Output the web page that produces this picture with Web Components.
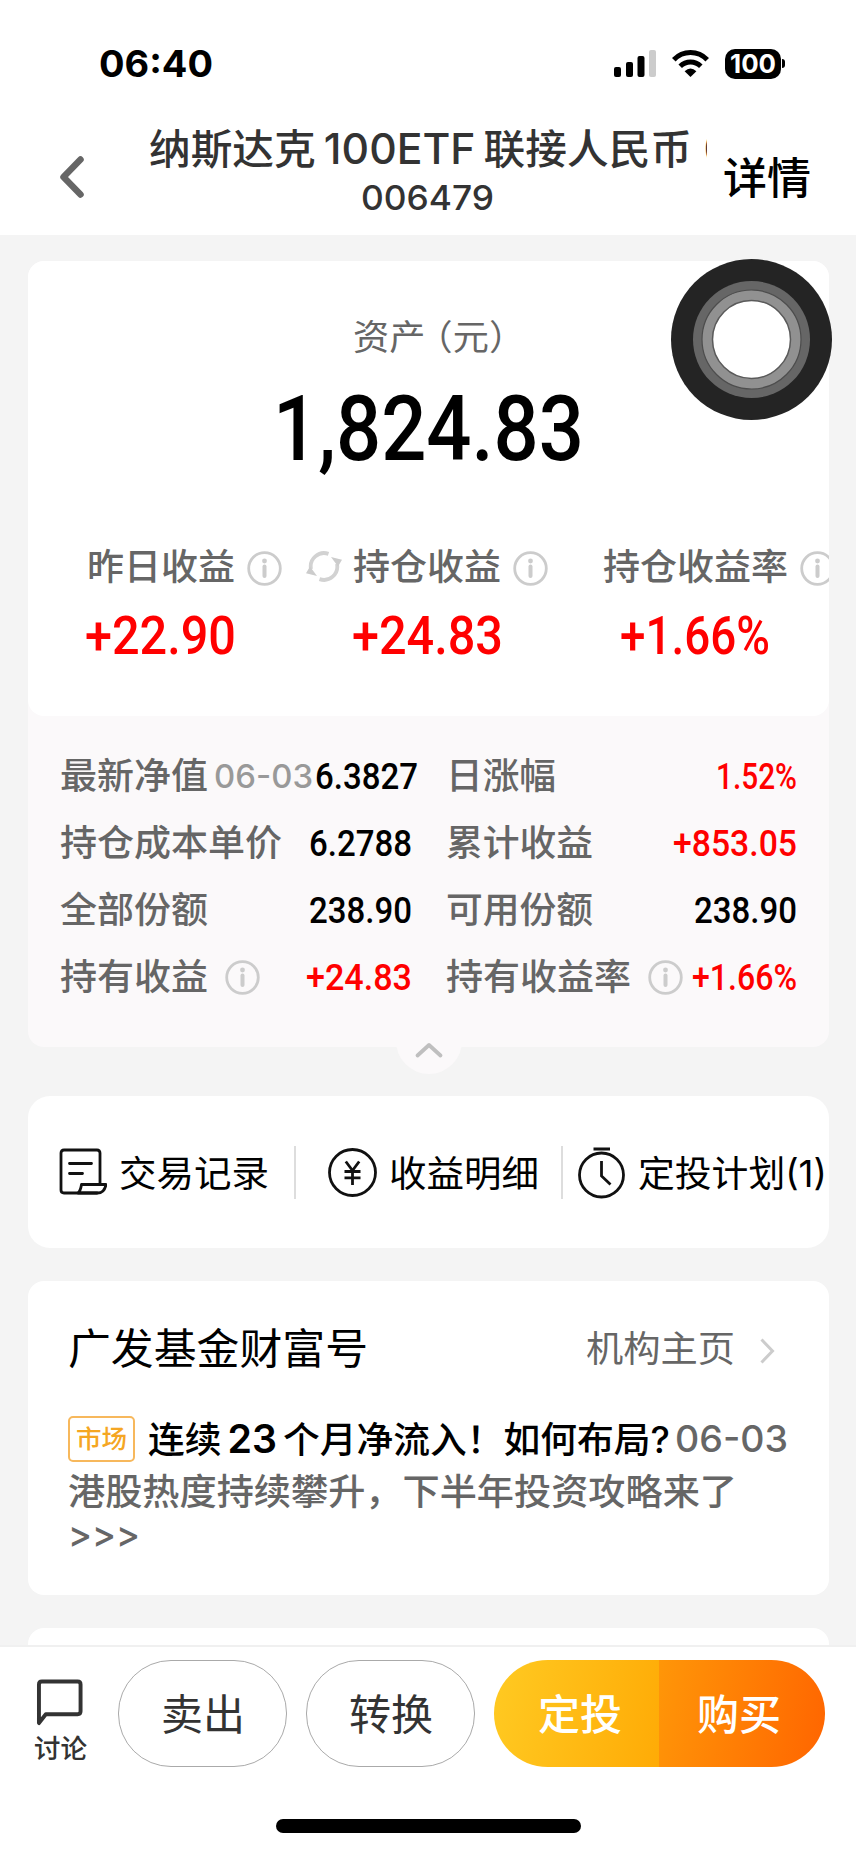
<!DOCTYPE html>
<html lang="zh-CN">
<head>
<meta charset="utf-8">
<title>持仓详情</title>
<style>
  html, body {
    margin: 0;
    height: 100%;
  }
  body {
    display: flex;
    flex-direction: column;
    width: 856px;
    height: 1854px;
    overflow: hidden;
    background: #f4f4f4;
    color: #000;
    font-family: Inter, "Noto Sans CJK SC", sans-serif;
    position: relative;
  }
  main {
    flex: 1;
    min-height: 0;
    overflow: hidden;
    padding: 26px 27px 0 28px;
  }
  fund-card { margin-top: 33px; }
  .en { margin: 0 8px; font-size: 42px; }
  .fund { white-space: nowrap; }
  .paren { font-feature-settings: "halt"; margin-left: 7px; }
</style>
</head>
<body>
  <status-bar time="06:40" battery="100"></status-bar>
  <nav-bar>
    <span slot="title" class="fund"><fit-text width="543">纳斯达克<span class="en">100ETF</span>联接人民币</fit-text><span class="paren">（</span></span>
    <fit-text slot="code" width="133">006479</fit-text>
    <fit-text slot="action" width="88">详情</fit-text>
  </nav-bar>
  <main>
    <asset-card></asset-card>
    <quick-actions></quick-actions>
    <fund-card></fund-card>
    <fund-card empty></fund-card>
  </main>
  <bottom-bar></bottom-bar>
  <assist-touch></assist-touch>

<script>
  const define = (name, html, setup) => {
    customElements.define(name, class extends HTMLElement {
      constructor() {
        super();
        this.attachShadow({ mode: 'open' });
      }

      connectedCallback() {
        this.shadowRoot.innerHTML = typeof html === 'function' ? html(this) : html;
        if (setup) setup(this);
      }
    });
  };

  //  *  icons  *  //
  define('info-icon', `
    <style>
      :host { display: block; width: 35px; height: 35px; flex: none; }
      svg { display: block; }
    </style>
    <svg width="35" height="35" viewBox="0 0 35 35" fill="none" stroke="#ccc">
      <circle cx="17.5" cy="17.5" r="15.8" stroke-width="2.8"/>
      <path d="M17.5 15.5V25" stroke-width="4" stroke-linecap="round"/>
      <circle cx="17.5" cy="10" r="2.4" fill="#ccc" stroke="none"/>
    </svg>
  `);

  define('refresh-icon', `
    <style>
      :host { display: block; width: 36px; height: 32px; flex: none; }
      svg { display: block; }
    </style>
    <svg width="36" height="32" viewBox="0 0 36 32" fill="none" stroke="#d2d2d2" stroke-width="3.8">
      <path d="M5 18A13.300 13.300 0 0 1 22.500 2.900"/>
      <path d="M31 13A13.300 13.300 0 0 1 13.500 28.100"/>
      <path d="M25 6L36 8.700L32 15.500Z" fill="#ccc" stroke="none"/>
      <path d="M11 25L0 22.300L4 15.500Z" fill="#ccc" stroke="none"/>
    </svg>
  `);

  //  *  header  *  //
  define('status-bar', (el) => `
    <style>
      :host {
        display: flex;
        align-items: center;
        height: 127px;
        padding: 0 71px 0 99px;
        box-sizing: border-box;
        background: #fff;
      }
      .time { font-size: 37px; font-weight: 700; flex: 1; }
      svg { display: block; }
      .wifi { margin: 0 16px; }
      .battery {
        width: 56px;
        height: 30px;
        border-radius: 10px;
        background: #000;
        color: #fff;
        display: flex;
        align-items: center;
        justify-content: center;
        font-size: 25.5px;
        font-weight: 700;
      }
      .cap { width: 3px; height: 9px; margin-left: 1px; border-radius: 0 4px 4px 0; background: #000; }
    </style>
    <span class="time"><fit-text width="114">${el.getAttribute('time')}</fit-text></span>
    <svg width="42" height="27" viewBox="0 0 42 27">
      <rect x="0" y="17" width="7" height="10" rx="2"/>
      <rect x="12" y="12" width="7" height="15" rx="2"/>
      <rect x="23.5" y="6" width="7" height="21" rx="2"/>
      <rect x="35" y="0" width="7" height="27" rx="2" fill="#ccc"/>
    </svg>
    <svg class="wifi" width="37" height="27" viewBox="0 0 37 27" fill="none" stroke="#000" stroke-width="5">
      <path d="M1.8 9.8C11 .2 26 .2 35.2 9.8"/>
      <path d="M8.2 16.3C14 10.6 23 10.6 28.8 16.3"/>
      <path d="M12.6 21.2Q18.5 16 24.4 21.2L18.5 27Z" fill="#000" stroke="none"/>
    </svg>
    <span class="battery"><fit-text width="46">${el.getAttribute('battery')}</fit-text></span>
    <span class="cap"></span>
  `);

  define('nav-bar', `
    <style>
      :host {
        display: flex;
        align-items: flex-start;
        height: 108px;
        background: #fff;
        color: #333;
      }
      .back { width: 148px; padding: 29px 0 0 60px; box-sizing: border-box; flex: none; }
      .back svg { display: block; }
      .titles { width: 559px; display: flex; flex-direction: column; align-items: center; flex: none; }
      .title { width: 558px; overflow: hidden; font-size: 41px; line-height: 50px; height: 50px; margin-top: -3px; font-weight: 500; }
      .code { font-size: 34.5px; line-height: 40px; margin: 4px 0 0 0; font-weight: 500; }
      .action { color: #000; font-size: 43px; line-height: 50px; font-weight: 500; margin: 26px 0 0 16px; }
    </style>
    <div class="back">
      <svg width="24" height="42" viewBox="0 0 24 42" fill="none" stroke="#666" stroke-width="6.5" stroke-linecap="round" stroke-linejoin="round">
        <path d="M20.5 3.5L3.5 21L20.5 38.5"/>
      </svg>
    </div>
    <div class="titles">
      <div class="title"><slot name="title"></slot></div>
      <div class="code"><slot name="code"></slot></div>
    </div>
    <div class="action"><slot name="action"></slot></div>
  `);

  //  *  holdings  *  //
  define('profit-stat', (el) => `
    <style>
      :host { display: block; }
      .label {
        display: grid;
        grid-template-columns: minmax(0, 1fr) auto minmax(0, 1fr);
        align-items: center;
        height: 50px;
        font-size: 36.5px;
        line-height: 50px;
        font-weight: 500;
        color: #666;
      }
      .before { display: flex; justify-content: flex-end; margin-right: 11px; }
      .after { margin: 2px 0 0 12px; }
      .value {
        display: flex;
        justify-content: center;
        margin-top: 14px;
        color: #f00;
        font: 500 53px/60px Roboto, sans-serif;
      }
    </style>
    <div class="label">
      <span class="before"><slot></slot></span>
      <fit-text width="${el.getAttribute('w')}">${el.getAttribute('label')}</fit-text>
      <info-icon class="after"></info-icon>
    </div>
    <div class="value"><fit-text width="${el.getAttribute('vw')}">${el.getAttribute('value')}</fit-text></div>
  `);

  define('detail-item', (el) => `
    <style>
      :host {
        display: flex;
        align-items: center;
        height: 67px;
        font-size: 36.5px;
        line-height: 50px;
        font-weight: 500;
        color: #666;
        white-space: nowrap;
      }
      .date { color: #999; font-size: 33px; margin-left: 8px; }
      info-icon { margin: 2px 0 0 17px; }
      .value { margin-left: auto; color: #000; font: 500 37.5px/50px Roboto, sans-serif; }
      .value.tight { margin-left: 2px; }
      :host([up]) .value { color: #f00; }
    </style>
    <fit-text width="${el.getAttribute('w')}">${el.getAttribute('label')}</fit-text>
    ${el.hasAttribute('date') ? `<span class="date"><fit-text width="99">${el.getAttribute('date')}</fit-text></span>` : ''}
    ${el.hasAttribute('info') ? '<info-icon></info-icon>' : ''}
    <span class="value ${el.hasAttribute('date') ? 'tight' : ''}"><fit-text width="${el.getAttribute('vw')}">${el.getAttribute('value')}</fit-text></span>
  `);

  define('asset-card', `
    <style>
      :host { display: block; height: 835px; }
      .card { height: 786px; border-radius: 16px; background: #fbf9fa; }
      .top { height: 455px; border-radius: 16px; background: #fff; overflow: hidden; }
      .caption {
        display: flex;
        justify-content: center;
        padding: 51px 0 0 2px;
        font-size: 35px;
        line-height: 50px;
        color: #666;
        font-weight: 400;
      }
      .unit { font-feature-settings: "halt"; margin-left: 9px; }
      .total { display: flex; justify-content: center; margin-top: 12px; font: 500 91px/110px Roboto, sans-serif; }
      .stats { display: grid; grid-template-columns: 265px 268px 268px; margin-top: 58px; }
      .details {
        display: grid;
        grid-template-columns: 352px 351px;
        column-gap: 34px;
        padding: 26px 0 0 32px;
      }
      .fold { display: flex; justify-content: center; }
      .fold svg { display: block; margin-top: -33px; }
    </style>
    <div class="card">
      <div class="top">
        <div class="caption"><fit-text width="154">资产<span class="unit">（元）</span></fit-text></div>
        <div class="total"><fit-text width="311">1,824.83</fit-text></div>
        <div class="stats">
          <profit-stat label="昨日收益" w="148" value="+22.90" vw="151"></profit-stat>
          <profit-stat label="持仓收益" w="148" value="+24.83" vw="151"><refresh-icon></refresh-icon></profit-stat>
          <profit-stat label="持仓收益率" w="185" value="+1.66%" vw="150"></profit-stat>
        </div>
      </div>
      <div class="details">
        <detail-item label="最新净值" w="148" date="06-03" value="6.3827" vw="103"></detail-item>
        <detail-item label="日涨幅" w="110" value="1.52%" vw="81" up></detail-item>
        <detail-item label="持仓成本单价" w="222" value="6.2788" vw="103"></detail-item>
        <detail-item label="累计收益" w="147" value="+853.05" vw="124" up></detail-item>
        <detail-item label="全部份额" w="148" value="238.90" vw="103"></detail-item>
        <detail-item label="可用份额" w="147" value="238.90" vw="103"></detail-item>
        <detail-item label="持有收益" w="148" info value="+24.83" vw="106" up></detail-item>
        <detail-item label="持有收益率" w="185" info value="+1.66%" vw="105" up></detail-item>
      </div>
    </div>
    <div class="fold">
      <svg width="66" height="60" viewBox="0 0 66 60" fill="none">
        <path d="M0 27a33 33 0 0 0 66 0Z" fill="#fbf9fa"/>
        <path d="M21.5 41.5L33 31L44.5 41.5" stroke="#bfbfbf" stroke-width="3.8" stroke-linecap="round" stroke-linejoin="round"/>
      </svg>
    </div>
  `);

  //  *  shortcuts  *  //
  define('quick-actions', `
    <style>
      :host {
        display: flex;
        align-items: center;
        height: 152px;
        border-radius: 22px;
        background: #fff;
        font-size: 36.5px;
        line-height: 50px;
        overflow: hidden;
      }
      .item { display: flex; align-items: center; height: 53px; box-sizing: border-box; flex: none; }
      .item + .item { border-left: 2px solid #ddd; }
      .item:nth-of-type(1) { width: 266px; padding-left: 31px; }
      .item:nth-of-type(2) { width: 267px; padding-left: 32px; }
      .item:nth-of-type(3) { padding-left: 15px; }
      svg { display: block; flex: none; }
      fit-text { flex: none; margin: 3px 0 0 12px; }
    </style>
    <div class="item">
      <svg width="48" height="48" viewBox="0 0 48 48" fill="none" stroke="#111" stroke-width="2.8" stroke-linejoin="round" stroke-linecap="round">
        <path d="M41 36V5Q41 2 38 2H5Q2 2 2 5V42Q2 45 5 45H38"/>
        <path d="M19 45Q21.5 43 22.5 36.5H47Q45.5 45 38.5 45Z"/>
        <path d="M10.5 15.5H32.5M10.5 25.5H23.5"/>
      </svg>
      <fit-text width="150">交易记录</fit-text>
    </div>
    <div class="item">
      <svg width="49" height="49" viewBox="0 0 49 49" fill="none" stroke="#111" stroke-width="2.8">
        <circle cx="24.5" cy="24.5" r="23"/>
        <path d="M17.8 13.5L24.5 22.5L31.2 13.5M24.5 22.5V37M16.5 23.5H32.5M16.5 29.8H32.5"/>
      </svg>
      <fit-text width="150">收益明细</fit-text>
    </div>
    <div class="item">
      <svg width="48" height="53" viewBox="0 0 48 53" fill="none" stroke="#111" stroke-width="2.8">
        <circle cx="23.5" cy="29" r="22"/>
        <path d="M15.5 3H32M23.5 15V30L32.5 38.5"/>
      </svg>
      <fit-text width="189">定投计划(1)</fit-text>
    </div>
  `);

  define('fund-card', (el) => `
    <style>
      :host { display: block; height: 314px; border-radius: 16px; background: #fff; box-sizing: border-box; padding: 39px 38px 0 40px; color: #666; font-size: 36.5px; font-weight: 500; }
      header { display: flex; align-items: center; justify-content: space-between; line-height: 58px; font-weight: 400; }
      .name { font-size: 42.5px; color: #000; }
      .more { display: flex; align-items: center; font-size: 36.5px; padding-right: 16px; }
      .more svg { display: block; margin: 3px 0 0 25px; }
      .news { display: flex; align-items: center; height: 54px; margin-top: 34px; line-height: 50px; white-space: nowrap; }
      .tag {
        display: flex;
        align-items: center;
        justify-content: center;
        width: 67px;
        height: 46px;
        box-sizing: border-box;
        border: 2px solid #f7b85c;
        border-radius: 5px;
        color: #f5a623;
        font-size: 25.5px;
        line-height: 42px;
        margin: 0 13px 0 0;
      }
      .title { color: #000; }
      .num { margin: 0 6px; font-size: 39px; font-weight: 600; }
      .date { margin-left: 5px; }
      .desc { line-height: 50px; margin-top: 1px; }
      .arrows { line-height: 42px; margin-top: -4px; }
    </style>
    ${el.hasAttribute('empty') ? '' : `
    <header>
      <span class="name"><fit-text width="300">广发基金财富号</fit-text></span>
      <span class="more">
        <fit-text width="149">机构主页</fit-text>
        <svg width="15" height="26" viewBox="0 0 15 26" fill="none" stroke="#ccc" stroke-width="3"><path d="M1.5 1.5L12.5 13L1.5 24.5"/></svg>
      </span>
    </header>
    <div class="news">
      <span class="tag"><fit-text width="51">市场</fit-text></span>
      <span class="title"><fit-text width="522">连续<span class="num">23</span>个月净流入！如何布局?</fit-text></span>
      <span class="date"><fit-text width="113">06-03</fit-text></span>
    </div>
    <div class="desc"><fit-text width="669">港股热度持续攀升，下半年投资攻略来了</fit-text></div>
    <div class="arrows"><fit-text width="72">&gt;&gt;&gt;</fit-text></div>`}
  `);

  //  *  footer  *  //
  define('bottom-bar', `
    <style>
      :host {
        display: block;
        height: 209px;
        box-sizing: border-box;
        border-top: 2px solid #f0f0f0;
        background: #fff;
        color: #333;
      }
      .row { display: flex; padding: 13px 31px 0 34px; height: 107px; }
      .talk { display: flex; flex-direction: column; align-items: flex-start; width: 84px; font-size: 26px; line-height: 36px; font-weight: 500; }
      .talk svg { display: block; margin: 19px 0 5px 2px; }
      .btn {
        display: flex;
        align-items: center;
        justify-content: center;
        box-sizing: border-box;
        width: 169px;
        height: 107px;
        border: 1.5px solid #aaa;
        border-radius: 53px;
        margin-right: 19px;
        font-size: 42px;
        line-height: 60px;
      }
      .btn fit-text, .pair fit-text { margin-top: 2px; }
      .pair { display: flex; width: 331px; height: 107px; border-radius: 54px; overflow: hidden; color: #fff; font-size: 42px; line-height: 60px; font-weight: 500; }
      .pair span { display: flex; align-items: center; justify-content: center; }
      .plan { width: 165px; background: linear-gradient(100deg, #ffca22, #ffab06); }
      .buy { width: 166px; background: linear-gradient(100deg, #ff9608, #ff6500); }
      .plan fit-text { margin-left: 7px; }
      .buy fit-text { margin-right: 7px; }
      .home { width: 305px; height: 14px; margin: 52px auto 0; border-radius: 7px; background: #000; }
    </style>
    <div class="row">
      <div class="talk">
        <svg width="48" height="48" viewBox="0 0 48 48" fill="none" stroke="#333" stroke-width="4" stroke-linejoin="round">
          <path d="M2.5 45V5.5Q2.5 2.5 5.5 2.5H42Q45 2.5 45 5.5V33Q45 36 42 36H9.5Z"/>
        </svg>
        <fit-text width="53">讨论</fit-text>
      </div>
      <div class="btn"><fit-text width="84">卖出</fit-text></div>
      <div class="btn"><fit-text width="84">转换</fit-text></div>
      <div class="pair">
        <span class="plan"><fit-text width="84">定投</fit-text></span>
        <span class="buy"><fit-text width="84">购买</fit-text></span>
      </div>
    </div>
    <div class="home"></div>
  `);

  //  *  floating button over the page  *  //
  define('assist-touch', `
    <style>
      :host { position: absolute; left: 671px; top: 259px; width: 161px; height: 161px; }
      svg { display: block; }
    </style>
    <svg width="161" height="161" viewBox="0 0 161 161">
      <circle cx="80.5" cy="80.5" r="80.5" fill="#242424"/>
      <circle cx="80.5" cy="80.5" r="58.5" fill="#666"/>
      <circle cx="80.5" cy="80.5" r="49.5" fill="#919191" stroke="#4d4d4d" stroke-width="1.2"/>
      <circle cx="80.5" cy="80.5" r="39" fill="#fff" stroke="#5a5a5a" stroke-width="1.5"/>
    </svg>
  `);

  //  *  single line of text stretched to a given width, registered last so the
  //     fonts of its parents are already in place when it measures itself  *  //
  define('fit-text', `
    <style>
      :host { display: inline-block; white-space: nowrap; vertical-align: top; }
      span { display: inline-block; transform-origin: 0 50%; }
    </style>
    <span><slot></slot></span>
  `, (el) => {
    const width = Number(el.getAttribute('width'));
    const span = el.shadowRoot.querySelector('span');
    const natural = span.getBoundingClientRect().width;
    el.style.width = width + 'px';
    span.style.transform = `scaleX(${width / natural})`;
  });
</script>
</body>
</html>
